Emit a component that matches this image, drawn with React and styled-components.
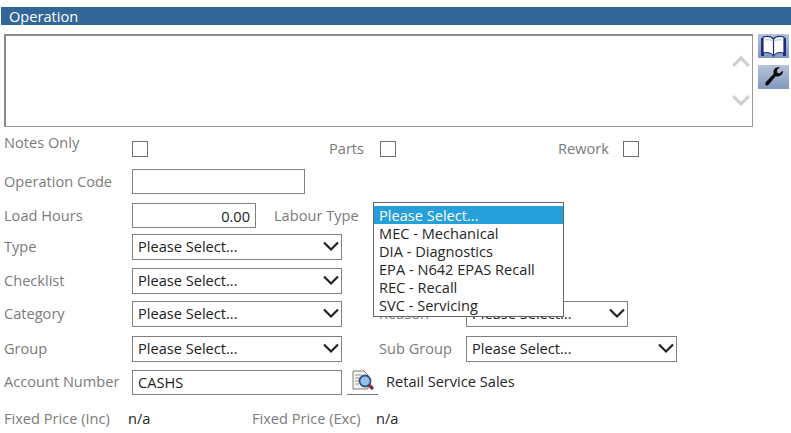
import React from 'react';
import styled, { createGlobalStyle } from 'styled-components';

const GlobalStyle = createGlobalStyle`
    html, body {
        margin: 0;
        padding: 0;
        background: #fff;
        font-family: "Open Sans", "Noto Sans", "Liberation Sans", sans-serif;
        font-size: 14.6px;
    }
`
const Page = styled.div`
    width: 791px;
    height: 433px;
    overflow: hidden;
    padding-top: 7px;
    box-sizing: border-box;
`
const Header = styled.div`
    height: 18px;
    margin-left: 1px;
    padding-left: 8px;
    line-height: 19px;
    background: #326699;
    color: #fff;
    font-size: 14.6px;
`
const NotesRow = styled.div`
    display: flex;
    gap: 5px;
    margin: 9px 0 0 4px;
`
const NotesBox = styled.div`
    position: relative;
    width: 749px;
    height: 93px;
    box-sizing: border-box;
    border: 1px solid #999;
    border-top: 2px solid #8c8c8c;
    border-left: 2px solid #8c8c8c;
`
const ScrollArrows = styled.div`
    position: absolute;
    top: 17px;
    right: 0;
    width: 22px;
    height: 56px;
    display: flex;
    flex-direction: column;
    justify-content: space-between;
    align-items: center;
`
const Tools = styled.div`
    display: flex;
    flex-direction: column;
    gap: 7px;
`
const ToolButton = styled.div`
    width: 31px;
    height: 24px;
    background: linear-gradient(#b4c3da, #8298bc);
    display: flex;
    align-items: center;
    justify-content: center;
`
const Row = styled.div`
    position: relative;
    display: flex;
    align-items: center;
    height: ${p => p.$height || 26}px;
    margin-top: ${p => p.$top}px;
    padding-left: 4px;
`
const Label = styled.div`
    flex: none;
    width: ${p => p.$width || 128}px;
    margin-left: ${p => p.$left || 0}px;
    padding-bottom: 2px;
    color: #7b7b7b;
    white-space: nowrap;
`
const RaisedLabel = styled(Label)`
    margin-bottom: 12px;
`
const Value = styled.div`
    flex: none;
    width: ${p => p.$width || 'auto'};
    margin-left: ${p => p.$left || 0}px;
    padding-bottom: 2px;
    color: #262626;
    white-space: nowrap;
`
const Check = styled.input.attrs({ type: 'checkbox' })`
    appearance: none;
    flex: none;
    width: 16px;
    height: 16px;
    margin: 0 0 0 ${p => p.$left || 0}px;
    border: 1px solid #707070;
    background: #fff;
`
const TextBox = styled.input`
    flex: none;
    box-sizing: border-box;
    width: ${p => p.$width}px;
    height: 25px;
    padding: 0 5px;
    border: 1px solid #808080;
    border-radius: 0;
    outline: none;
    font: inherit;
    color: #222;
    text-align: ${p => p.$align || 'left'};
`
const SelectBox = styled.div`
    flex: none;
    box-sizing: border-box;
    display: flex;
    align-items: center;
    justify-content: space-between;
    width: ${p => p.$width || 210}px;
    height: 26px;
    padding: 0 2px 2px 5px;
    border: 1px solid #808080;
    color: #222;
`
const DropdownList = styled.ul`
    position: absolute;
    z-index: 2;
    left: 373px;
    top: -1px;
    width: 191px;
    height: 115px;
    box-sizing: border-box;
    margin: 0;
    padding: 3px 0 0;
    list-style: none;
    background: #fff;
    border: 1px solid #646464;
`
const DropdownItem = styled.li`
    height: 18px;
    line-height: 18px;
    padding-left: 5px;
    background: ${p => (p.$active ? '#26a0da' : 'transparent')};
    color: ${p => (p.$active ? '#fff' : '#262626')};
`
const LookupButton = styled.div`
    flex: none;
    width: 31px;
    height: 24px;
    margin: 0 8px 0 5px;
    border-bottom: 1px solid #777;
    display: flex;
    align-items: center;
    justify-content: center;
`

const labourTypes = ['Please Select...', 'MEC - Mechanical', 'DIA - Diagnostics', 'EPA - N642 EPAS Recall', 'REC - Recall', 'SVC - Servicing'];

function Chevron({ size = 16, color = '#222', width = 2.2, up = false }) {
  return (
    <svg width={size} height={size} viewBox="0 0 16 16">
      <path d={up ? 'M1 11.5 8 4.5l7 7' : 'M1 4.5l7 7 7-7'} fill="none" stroke={color} strokeWidth={width} />
    </svg>
  );
}

function Select({ width }) {
  return (
    <SelectBox $width={width}>
      Please Select...
      <Chevron />
    </SelectBox>
  );
}

function BookIcon() {
  return (
    <svg width="31" height="24" viewBox="0 0 31 24">
      <path d="M3 4h3v18H3zM25 4h3v18h-3z" fill="#1d2f7c" />
      <path d="M5 3c4-1 8-1 10.500 2 2.500-3 6.500-3 10.500-2v16c-4-1-8-1-10.500 3-2.500-4-6.500-4-10.500-3z" fill="#fff" stroke="#1d2f7c" strokeWidth="1.200" />
      <path d="M15.500 5v17" stroke="#1d2f7c" strokeWidth="1.200" />
      <path d="M7 6c3-.5 5-.3 7 1M24 6c-3-.5-5-.3-7 1" fill="none" stroke="#9fc0e6" strokeWidth="1" />
    </svg>
  );
}

function WrenchIcon() {
  return (
    <svg width="22" height="22" viewBox="0 0 22 22">
      <path d="M20 4.500l-3.500 3-2.500-1 .2-3L17 1.500c-3-1-6 .5-6.500 3.500-.2 1 0 2 .3 2.800L3 16c-1.500 1.500-.5 4 1.500 3.500.5-.1 1-.5 1.300-.9l6.900-8.300c1 .3 2 .3 3 0 3-.8 4.500-3 4.300-5.800z" fill="#0c0c0c" />
    </svg>
  );
}

function LookupIcon() {
  return (
    <svg width="26" height="23" viewBox="0 0 26 23">
      <path d="M3 1h11l4 4v14H3z" fill="#f4f4ee" stroke="#7d7d7d" />
      <path d="M5 5h7M5 8h5M5 11h4M5 14h4" stroke="#9a9a9a" />
      <circle cx="15" cy="11" r="5.500" fill="#8fc1ea" stroke="#33517c" strokeWidth="1.800" />
      <path d="M19 15l4 4" stroke="#7d2f45" strokeWidth="3.200" />
    </svg>
  );
}

export default function App() {
  return (
    <>
      <GlobalStyle />
      <Page>
        <Header>Operation</Header>
        <NotesRow>
          <NotesBox>
            <ScrollArrows>
              <Chevron size={18} color="#d0d0d0" width={2.8} up />
              <Chevron size={18} color="#d0d0d0" width={2.8} />
            </ScrollArrows>
          </NotesBox>
          <Tools>
            <ToolButton><BookIcon /></ToolButton>
            <ToolButton><WrenchIcon /></ToolButton>
          </Tools>
        </NotesRow>

        <Row $top={11} $height={22}>
          <RaisedLabel>Notes Only</RaisedLabel>
          <Check />
          <Label $left={181} $width={51}>Parts</Label>
          <Check />
          <Label $left={162} $width={65}>Rework</Label>
          <Check />
        </Row>
        <Row $top={9} $height={25}>
          <Label>Operation Code</Label>
          <TextBox $width={173} />
        </Row>
        <Row $top={9} $height={25}>
          <Label>Load Hours</Label>
          <TextBox $width={124} $align="right" defaultValue="0.00" />
          <Label $left={18}>Labour Type</Label>
          <DropdownList>
            {labourTypes.map((t, i) => (
              <DropdownItem key={t} $active={i === 0}>{t}</DropdownItem>
            ))}
          </DropdownList>
        </Row>
        <Row $top={6}>
          <Label>Type</Label>
          <Select />
        </Row>
        <Row $top={8}>
          <Label>Checklist</Label>
          <Select />
        </Row>
        <Row $top={7}>
          <Label>Category</Label>
          <Select />
          <Label $left={37} $width={87}>Reason</Label>
          <Select width={162} />
        </Row>
        <Row $top={9}>
          <Label>Group</Label>
          <Select />
          <Label $left={37} $width={87}>Sub Group</Label>
          <Select width={211} />
        </Row>
        <Row $top={7}>
          <Label>Account Number</Label>
          <TextBox $width={210} defaultValue="CASHS" />
          <LookupButton><LookupIcon /></LookupButton>
          <Value>Retail Service Sales</Value>
        </Row>
        <Row $top={13} $height={22}>
          <Label $width={124}>Fixed Price (Inc)</Label>
          <Value $width="124px">n/a</Value>
          <Label $width={124}>Fixed Price (Exc)</Label>
          <Value>n/a</Value>
        </Row>
      </Page>
    </>
  );
}
